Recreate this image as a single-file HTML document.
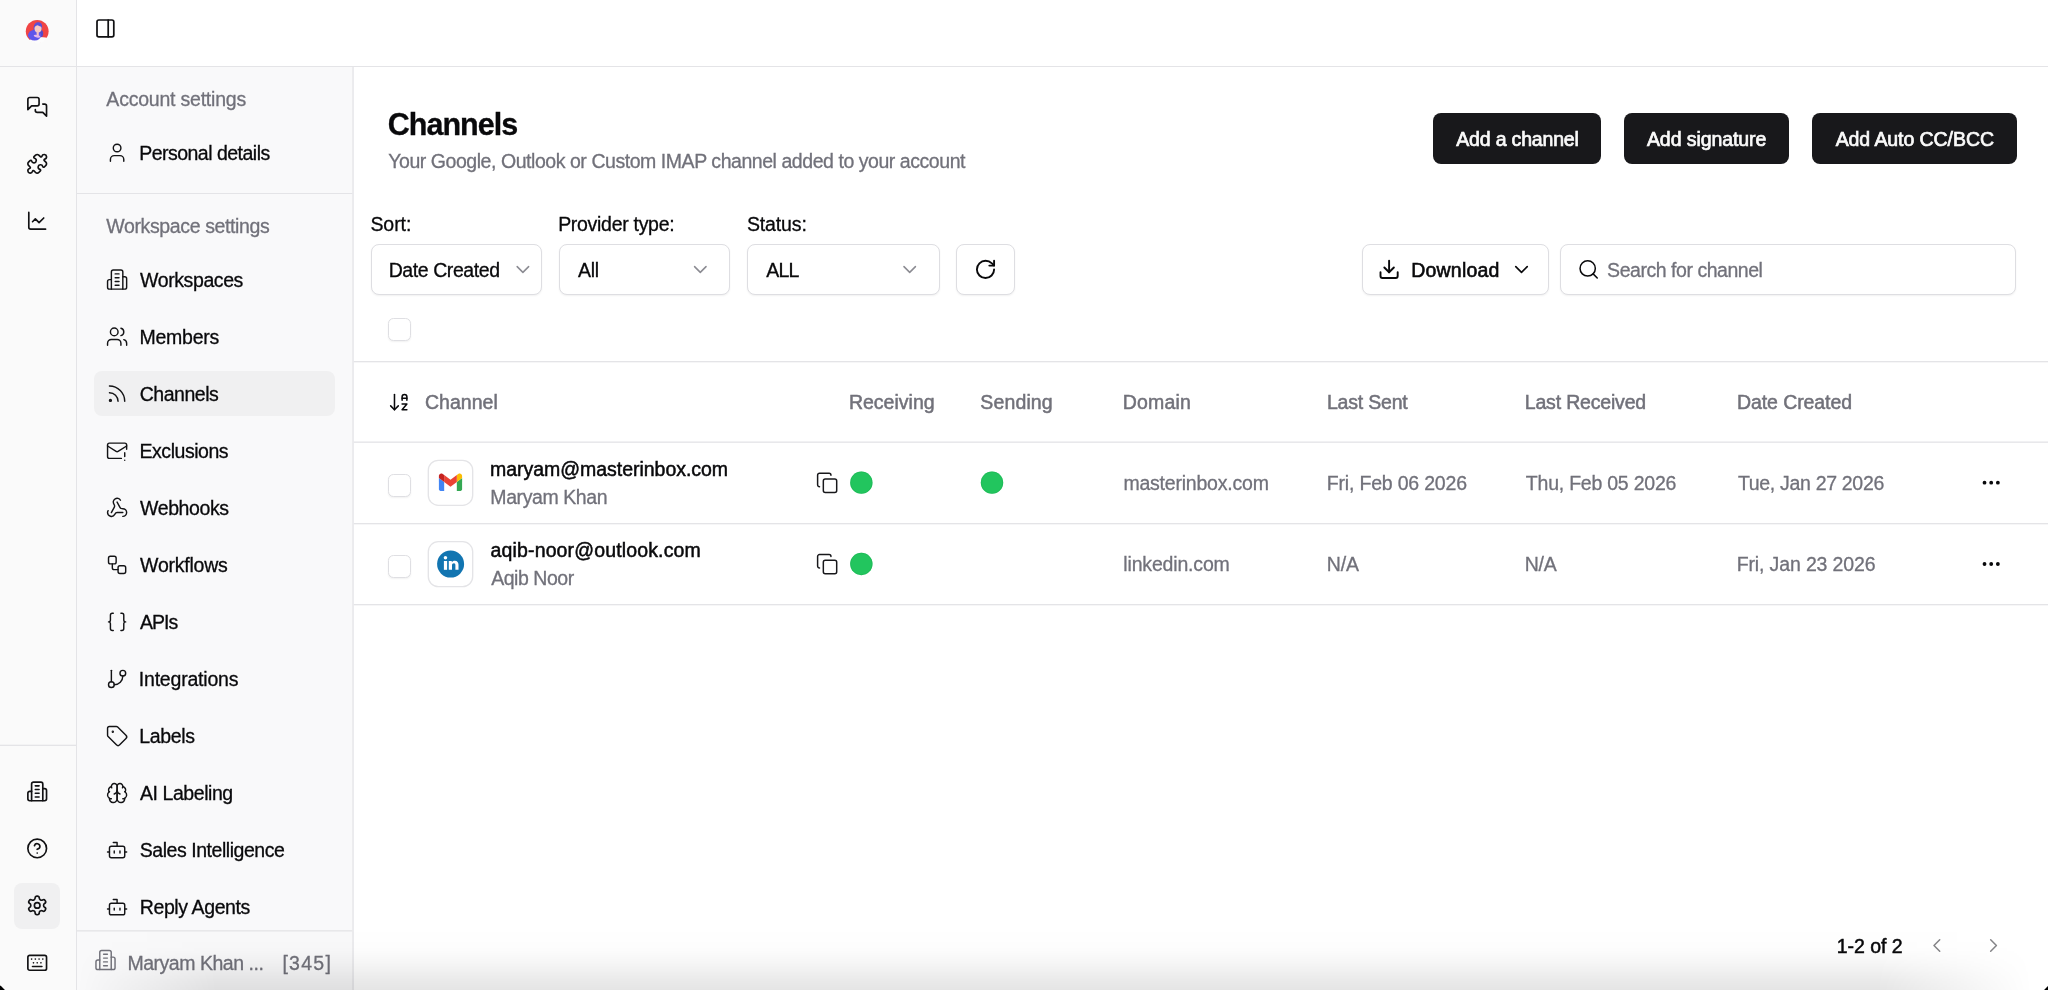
<!DOCTYPE html>
<html><head><meta charset="utf-8"><title>Channels</title>
<style>
html,body{margin:0;padding:0;background:#fff;width:2048px;height:990px;overflow:hidden}
#r{width:2048px;height:990px;position:relative;overflow:hidden;font-family:"Liberation Sans",sans-serif;-webkit-font-smoothing:antialiased}
#r>div,#r>span,#r>svg{position:absolute;display:block}
#r>span{white-space:nowrap;line-height:normal;will-change:transform}
</style></head><body><div id="r">
<div style="left:0px;top:0px;width:76px;height:990px;background:#fafafa"></div>
<div style="left:77px;top:67px;width:276px;height:923px;background:#f9f9fa"></div>
<svg style="left:0;top:0" width="2048" height="990" viewBox="0 0 2048 990"><rect x="76" y="0" width="1" height="990" fill="#e4e4e7"/><rect x="0" y="66" width="2048" height="1" fill="#e4e4e7"/><rect x="352.38" y="67" width="1.33" height="923" fill="#e4e4e7"/><rect x="0" y="744.7" width="76" height="1.33" fill="#e4e4e7"/><rect x="77" y="193" width="275.4" height="1" fill="#e4e4e7"/><rect x="77" y="930.2" width="275.4" height="1.33" fill="#e4e4e7"/><rect x="353.7" y="361" width="1695" height="1.33" fill="#e4e4e7"/><rect x="353.7" y="441.5" width="1695" height="1.33" fill="#e4e4e7"/><rect x="353.7" y="523" width="1695" height="1.33" fill="#e4e4e7"/><rect x="353.7" y="604" width="1695" height="1.33" fill="#e4e4e7"/></svg>
<svg style="left:22px;top:15px" width="30" height="30" viewBox="0 0 30 30">
<defs><clipPath id="av"><circle cx="15.2" cy="16.3" r="11.4"/></clipPath><clipPath id="av2"><circle cx="15.2" cy="16.3" r="12.1"/></clipPath></defs>
<g clip-path="url(#av)"><rect width="30" height="30" fill="#f04444"/></g>
<g clip-path="url(#av2)"><ellipse cx="18.5" cy="28.6" rx="13" ry="6.6" fill="#fcfcfc"/></g>
<g clip-path="url(#av)">
<ellipse cx="18.9" cy="18.6" rx="2.3" ry="3.6" fill="#5548c8"/>
<ellipse cx="12.6" cy="20.2" rx="6.6" ry="5.4" fill="#5f55ea"/>
<path d="M11.6 15.5 C11 9.5 13.5 7.2 16.2 7.2 C19.2 7.2 20.6 9.6 20 13 L19 15 Z" fill="#5a4fd6"/>
<ellipse cx="16" cy="13.6" rx="3.5" ry="3.9" fill="#f8c8c2"/>
<path d="M12.4 12.2 C12.8 9.3 15 8.6 16.8 8.9 C18.6 9.2 19.6 10.4 19.6 11.6 C17.8 11.4 16.4 10.6 15.2 10.2 C14.2 10.6 13.2 11.4 12.4 12.2 Z" fill="#5a4fd6"/>
<rect x="14.6" y="16.6" width="2.2" height="5" fill="#f6bfc4"/>
<ellipse cx="15" cy="21.3" rx="3.3" ry="1.3" fill="#e3b4ec" transform="rotate(12 15 21.3)"/>
</g></svg>
<svg style="left:94px;top:17px" width="24" height="24" fill="none" stroke="#111113" stroke-width="1.85" stroke-linecap="round" stroke-linejoin="round"><g transform="translate(0.200 0.200) scale(0.93333 0.93333) translate(0 0)"><rect width="18" height="18" x="3" y="3" rx="2"/><path d="M15 3v18"/></g></svg>
<svg style="left:26px;top:95px" width="24" height="25" fill="none" stroke="#111113" stroke-width="1.78" stroke-linecap="round" stroke-linejoin="round"><g transform="translate(0.000 0.650) scale(0.93333 0.93333) translate(0 0)"><path d="M14 9a2 2 0 0 1-2 2H6l-4 4V4a2 2 0 0 1 2-2h8a2 2 0 0 1 2 2z"/><path d="M18 9h2a2 2 0 0 1 2 2v11l-4-4h-6a2 2 0 0 1-2-2v-1"/></g></svg>
<svg style="left:26px;top:152px" width="24" height="25" fill="none" stroke="#111113" stroke-width="1.78" stroke-linecap="round" stroke-linejoin="round"><g transform="translate(0.000 0.600) scale(0.93333 0.93333) translate(0 0)"><path d="M15.39 4.39a1 1 0 0 0 1.68-.474 2.5 2.5 0 1 1 3.014 3.015 1 1 0 0 0-.474 1.68l1.683 1.682a2.414 2.414 0 0 1 0 3.414L19.61 15.39a1 1 0 0 1-1.68-.474 2.5 2.5 0 1 0-3.014 3.015 1 1 0 0 1 .474 1.68l-1.683 1.682a2.414 2.414 0 0 1-3.414 0L8.61 19.61a1 1 0 0 0-1.68.474 2.5 2.5 0 1 1-3.014-3.015 1 1 0 0 0 .474-1.68l-1.683-1.682a2.414 2.414 0 0 1 0-3.414L4.39 8.61a1 1 0 0 1 1.68.474 2.5 2.5 0 1 0 3.014-3.015 1 1 0 0 1-.474-1.68l1.683-1.682a2.414 2.414 0 0 1 3.414 0z"/></g></svg>
<svg style="left:26px;top:209px" width="24" height="25" fill="none" stroke="#111113" stroke-width="1.78" stroke-linecap="round" stroke-linejoin="round"><g transform="translate(0.000 0.600) scale(0.93333 0.93333) translate(0 0)"><path d="M3 3v16a2 2 0 0 0 2 2h16"/><path d="m19 9-5 5-4-4-3 3"/></g></svg>
<svg style="left:26px;top:780px" width="24" height="24" fill="none" stroke="#111113" stroke-width="1.78" stroke-linecap="round" stroke-linejoin="round"><g transform="translate(0.000 0.200) scale(0.93333 0.93333) translate(0 0)"><path d="M6 22V4a2 2 0 0 1 2-2h8a2 2 0 0 1 2 2v18Z"/><path d="M6 12H4a2 2 0 0 0-2 2v6a2 2 0 0 0 2 2h2"/><path d="M18 9h2a2 2 0 0 1 2 2v9a2 2 0 0 1-2 2h-2"/><path d="M10 6h4"/><path d="M10 10h4"/><path d="M10 14h4"/><path d="M10 18h4"/></g></svg>
<svg style="left:26px;top:837px" width="24" height="24" fill="none" stroke="#111113" stroke-width="1.78" stroke-linecap="round" stroke-linejoin="round"><g transform="translate(0.000 0.200) scale(0.93333 0.93333) translate(0 0)"><circle cx="12" cy="12" r="10"/><path d="M9.09 9a3 3 0 0 1 5.83 1c0 2-3 3-3 3"/><path d="M12 17h.01"/></g></svg>
<div style="left:14px;top:883px;width:46px;height:46px;background:#f0f0f1;border-radius:8px"></div>
<svg style="left:26px;top:894px" width="24" height="24" fill="none" stroke="#111113" stroke-width="1.78" stroke-linecap="round" stroke-linejoin="round"><g transform="translate(0.000 0.200) scale(0.93333 0.93333) translate(0 0)"><path d="M12.22 2h-.44a2 2 0 0 0-2 2v.18a2 2 0 0 1-1 1.73l-.43.25a2 2 0 0 1-2 0l-.15-.08a2 2 0 0 0-2.73.73l-.22.38a2 2 0 0 0 .73 2.73l.15.1a2 2 0 0 1 1 1.72v.51a2 2 0 0 1-1 1.74l-.15.09a2 2 0 0 0-.73 2.73l.22.38a2 2 0 0 0 2.73.73l.15-.08a2 2 0 0 1 2 0l.43.25a2 2 0 0 1 1 1.73V20a2 2 0 0 0 2 2h.44a2 2 0 0 0 2-2v-.18a2 2 0 0 1 1-1.73l.43-.25a2 2 0 0 1 2 0l.15.08a2 2 0 0 0 2.73-.73l.22-.39a2 2 0 0 0-.73-2.73l-.15-.08a2 2 0 0 1-1-1.74v-.5a2 2 0 0 1 1-1.74l.15-.09a2 2 0 0 0 .73-2.73l-.22-.38a2 2 0 0 0-2.73-.73l-.15.08a2 2 0 0 1-2 0l-.43-.25a2 2 0 0 1-1-1.73V4a2 2 0 0 0-2-2z"/><circle cx="12" cy="12" r="3"/></g></svg>
<svg style="left:26px;top:951px" width="24" height="24" fill="none" stroke="#111113" stroke-width="1.78" stroke-linecap="round" stroke-linejoin="round"><g transform="translate(0.000 0.600) scale(0.93333 0.93333) translate(0 0)"><path d="M10 8h.01"/><path d="M12 12h.01"/><path d="M14 8h.01"/><path d="M16 12h.01"/><path d="M18 8h.01"/><path d="M6 8h.01"/><path d="M7 16h10"/><path d="M8 12h.01"/><rect width="20" height="16" x="2" y="4" rx="2"/></g></svg>
<span id="t1" style="left:106px;padding-left:0.35px;top:88px;font-size:19.5px;font-weight:400;color:#71717a;letter-spacing:-0.219px;-webkit-text-stroke:0.3px #71717a;">Account settings</span>
<svg style="left:105px;top:141px" width="25" height="25" fill="none" stroke="#141416" stroke-width="1.5" stroke-linecap="round" stroke-linejoin="round"><g transform="translate(0.650 0.300) scale(0.95417 0.95417) translate(0 0)"><path d="M19 21v-2a4 4 0 0 0-4-4H9a4 4 0 0 0-4 4v2"/><circle cx="12" cy="7" r="4"/></g></svg>
<span id="t2" style="left:139px;padding-left:0.15px;top:142px;font-size:19.5px;font-weight:400;color:#09090b;letter-spacing:-0.510px;-webkit-text-stroke:0.3px #09090b;">Personal details</span>
<span id="t3" style="left:106px;padding-left:0.30px;top:215px;font-size:19.5px;font-weight:400;color:#71717a;letter-spacing:-0.373px;-webkit-text-stroke:0.3px #71717a;">Workspace settings</span>
<svg style="left:105px;top:268px" width="25" height="25" fill="none" stroke="#141416" stroke-width="1.5" stroke-linecap="round" stroke-linejoin="round"><g transform="translate(0.650 0.150) scale(0.95417 0.95417) translate(0 0)"><path d="M6 22V4a2 2 0 0 1 2-2h8a2 2 0 0 1 2 2v18Z"/><path d="M6 12H4a2 2 0 0 0-2 2v6a2 2 0 0 0 2 2h2"/><path d="M18 9h2a2 2 0 0 1 2 2v9a2 2 0 0 1-2 2h-2"/><path d="M10 6h4"/><path d="M10 10h4"/><path d="M10 14h4"/><path d="M10 18h4"/></g></svg>
<span id="t4" style="left:140px;padding-left:0.10px;top:269px;font-size:19.5px;font-weight:400;color:#09090b;letter-spacing:-0.409px;-webkit-text-stroke:0.3px #09090b;">Workspaces</span>
<svg style="left:105px;top:325px" width="25" height="25" fill="none" stroke="#141416" stroke-width="1.5" stroke-linecap="round" stroke-linejoin="round"><g transform="translate(0.650 0.200) scale(0.95417 0.95417) translate(0 0)"><path d="M16 21v-2a4 4 0 0 0-4-4H6a4 4 0 0 0-4 4v2"/><circle cx="9" cy="7" r="4"/><path d="M22 21v-2a4 4 0 0 0-3-3.87"/><path d="M16 3.13a4 4 0 0 1 0 7.75"/></g></svg>
<span id="t5" style="left:139px;padding-left:0.55px;top:326px;font-size:19.5px;font-weight:400;color:#09090b;letter-spacing:-0.261px;-webkit-text-stroke:0.3px #09090b;">Members</span>
<div style="left:94px;top:371px;width:241px;height:45px;background:#f0f0f1;border-radius:8px"></div>
<svg style="left:105px;top:382px" width="25" height="25" fill="none" stroke="#141416" stroke-width="1.5" stroke-linecap="round" stroke-linejoin="round"><g transform="translate(0.650 0.250) scale(0.95417 0.95417) translate(0 0)"><path d="M4 11a9 9 0 0 1 9 9"/><path d="M4 4a16 16 0 0 1 16 16"/><circle cx="5" cy="19" r="1"/></g></svg>
<span id="t6" style="left:139px;padding-left:0.70px;top:383px;font-size:19.5px;font-weight:400;color:#09090b;letter-spacing:-0.477px;-webkit-text-stroke:0.3px #09090b;">Channels</span>
<svg style="left:105px;top:439px" width="25" height="25" fill="none" stroke="#141416" stroke-width="1.5" stroke-linecap="round" stroke-linejoin="round"><g transform="translate(0.650 0.300) scale(0.95417 0.95417) translate(0 0)"><path d="M22 10.5V6a2 2 0 0 0-2-2H4a2 2 0 0 0-2 2v12c0 1.1.9 2 2 2h12.5"/><path d="m22 7-8.97 5.7a1.94 1.94 0 0 1-2.06 0L2 7"/><path d="M20 14v4"/><path d="M20 22v.01"/></g></svg>
<span id="t7" style="left:139px;padding-left:0.55px;top:440px;font-size:19.5px;font-weight:400;color:#09090b;letter-spacing:-0.467px;-webkit-text-stroke:0.3px #09090b;">Exclusions</span>
<svg style="left:105px;top:496px" width="25" height="25" fill="none" stroke="#141416" stroke-width="1.5" stroke-linecap="round" stroke-linejoin="round"><g transform="translate(0.650 0.350) scale(0.95417 0.95417) translate(0 0)"><path d="M18 16.98h-5.99c-1.1 0-1.95.94-2.48 1.9A4 4 0 0 1 2 17c.01-.7.2-1.4.57-2"/><path d="m6 17 3.13-5.78c.53-.97.1-2.18-.5-3.1a4 4 0 1 1 6.89-4.06"/><path d="m12 6 3.13 5.73C15.66 12.7 16.9 13 18 13a4 4 0 0 1 0 8"/></g></svg>
<span id="t8" style="left:140px;padding-left:0.10px;top:497px;font-size:19.5px;font-weight:400;color:#09090b;letter-spacing:-0.404px;-webkit-text-stroke:0.3px #09090b;">Webhooks</span>
<svg style="left:105px;top:553px" width="25" height="25" fill="none" stroke="#141416" stroke-width="1.5" stroke-linecap="round" stroke-linejoin="round"><g transform="translate(0.650 0.400) scale(0.95417 0.95417) translate(0 0)"><rect width="8" height="8" x="3" y="3" rx="2"/><path d="M7 11v4a2 2 0 0 0 2 2h4"/><rect width="8" height="8" x="13" y="13" rx="2"/></g></svg>
<span id="t9" style="left:140px;padding-left:0.10px;top:554px;font-size:19.5px;font-weight:400;color:#09090b;letter-spacing:-0.227px;-webkit-text-stroke:0.3px #09090b;">Workflows</span>
<svg style="left:105px;top:610px" width="25" height="25" fill="none" stroke="#141416" stroke-width="1.5" stroke-linecap="round" stroke-linejoin="round"><g transform="translate(0.650 0.450) scale(0.95417 0.95417) translate(0 0)"><path d="M8 3H7a2 2 0 0 0-2 2v5a2 2 0 0 1-2 2 2 2 0 0 1 2 2v5c0 1.1.9 2 2 2h1"/><path d="M16 21h1a2 2 0 0 0 2-2v-5c0-1.1.9-2 2-2a2 2 0 0 1-2-2V5a2 2 0 0 0-2-2h-1"/></g></svg>
<span id="t10" style="left:140px;padding-left:0.05px;top:611px;font-size:19.5px;font-weight:400;color:#09090b;letter-spacing:-1.027px;-webkit-text-stroke:0.3px #09090b;">APIs</span>
<svg style="left:105px;top:667px" width="25" height="25" fill="none" stroke="#141416" stroke-width="1.5" stroke-linecap="round" stroke-linejoin="round"><g transform="translate(0.650 0.500) scale(0.95417 0.95417) translate(0 0)"><line x1="6" x2="6" y1="3" y2="15"/><circle cx="18" cy="6" r="3"/><circle cx="6" cy="18" r="3"/><path d="M18 9a9 9 0 0 1-9 9"/></g></svg>
<span id="t11" style="left:138px;padding-left:0.80px;top:668px;font-size:19.5px;font-weight:400;color:#09090b;letter-spacing:-0.205px;-webkit-text-stroke:0.3px #09090b;">Integrations</span>
<svg style="left:105px;top:724px" width="25" height="25" fill="none" stroke="#141416" stroke-width="1.5" stroke-linecap="round" stroke-linejoin="round"><g transform="translate(0.650 0.550) scale(0.95417 0.95417) translate(0 0)"><path d="M12.586 2.586A2 2 0 0 0 11.172 2H4a2 2 0 0 0-2 2v7.172a2 2 0 0 0 .586 1.414l8.704 8.704a2.426 2.426 0 0 0 3.42 0l6.58-6.58a2.426 2.426 0 0 0 0-3.42z"/><circle cx="7.5" cy="7.5" r=".5" fill="#141416"/></g></svg>
<span id="t12" style="left:139px;padding-left:0.25px;top:725px;font-size:19.5px;font-weight:400;color:#09090b;letter-spacing:-0.353px;-webkit-text-stroke:0.3px #09090b;">Labels</span>
<svg style="left:105px;top:781px" width="25" height="25" fill="none" stroke="#141416" stroke-width="1.5" stroke-linecap="round" stroke-linejoin="round"><g transform="translate(0.650 0.600) scale(0.95417 0.95417) translate(0 0)"><path d="M12 5a3 3 0 1 0-5.997.125 4 4 0 0 0-2.526 5.77 4 4 0 0 0 .556 6.588A4 4 0 1 0 12 18Z"/><path d="M12 5a3 3 0 1 1 5.997.125 4 4 0 0 1 2.526 5.77 4 4 0 0 1-.556 6.588A4 4 0 1 1 12 18Z"/><path d="M15 13a4.5 4.5 0 0 1-3-4 4.5 4.5 0 0 1-3 4"/><path d="M17.599 6.5a3 3 0 0 0 .399-1.375"/><path d="M6.003 5.125A3 3 0 0 0 6.401 6.5"/><path d="M3.477 10.896a4 4 0 0 1 .585-.396"/><path d="M19.938 10.5a4 4 0 0 1 .585.396"/><path d="M6 18a4 4 0 0 1-1.967-.516"/><path d="M19.967 17.484A4 4 0 0 1 18 18"/></g></svg>
<span id="t13" style="left:140px;padding-left:0.05px;top:782px;font-size:19.5px;font-weight:400;color:#09090b;letter-spacing:-0.443px;-webkit-text-stroke:0.3px #09090b;">AI Labeling</span>
<svg style="left:105px;top:838px" width="25" height="25" fill="none" stroke="#141416" stroke-width="1.5" stroke-linecap="round" stroke-linejoin="round"><g transform="translate(0.650 0.650) scale(0.95417 0.95417) translate(0 0)"><path d="M12 8V4H8"/><rect width="16" height="12" x="4" y="8" rx="2"/><path d="M2 14h2"/><path d="M20 14h2"/><path d="M15 13v2"/><path d="M9 13v2"/></g></svg>
<span id="t14" style="left:139px;padding-left:0.70px;top:839px;font-size:19.5px;font-weight:400;color:#09090b;letter-spacing:-0.450px;-webkit-text-stroke:0.3px #09090b;">Sales Intelligence</span>
<svg style="left:105px;top:895px" width="25" height="25" fill="none" stroke="#141416" stroke-width="1.5" stroke-linecap="round" stroke-linejoin="round"><g transform="translate(0.650 0.700) scale(0.95417 0.95417) translate(0 0)"><path d="M12 8V4H8"/><rect width="16" height="12" x="4" y="8" rx="2"/><path d="M2 14h2"/><path d="M20 14h2"/><path d="M15 13v2"/><path d="M9 13v2"/></g></svg>
<span id="t15" style="left:139px;padding-left:0.75px;top:896px;font-size:19.5px;font-weight:400;color:#09090b;letter-spacing:-0.392px;-webkit-text-stroke:0.3px #09090b;">Reply Agents</span>
<svg style="left:94px;top:948px" width="24" height="25" fill="none" stroke="#71717a" stroke-width="1.5" stroke-linecap="round" stroke-linejoin="round"><g transform="translate(0.050 0.550) scale(0.95417 0.95417) translate(0 0)"><path d="M6 22V4a2 2 0 0 1 2-2h8a2 2 0 0 1 2 2v18Z"/><path d="M6 12H4a2 2 0 0 0-2 2v6a2 2 0 0 0 2 2h2"/><path d="M18 9h2a2 2 0 0 1 2 2v9a2 2 0 0 1-2 2h-2"/><path d="M10 6h4"/><path d="M10 10h4"/><path d="M10 14h4"/><path d="M10 18h4"/></g></svg>
<span id="t16" style="left:127px;padding-left:0.45px;top:952px;font-size:19.5px;font-weight:400;color:#71717a;letter-spacing:-0.478px;-webkit-text-stroke:0.3px #71717a;">Maryam Khan ...</span>
<span id="t17" style="left:282px;padding-left:0.40px;top:952px;font-size:19.5px;font-weight:400;color:#71717a;letter-spacing:1.262px;-webkit-text-stroke:0.3px #71717a;">[345]</span>
<span id="t18" style="left:387px;padding-left:0.80px;top:107px;font-size:30.5px;font-weight:700;color:#09090b;letter-spacing:-0.988px;-webkit-text-stroke:0.3px #09090b;">Channels</span>
<span id="t19" style="left:388px;padding-left:0.25px;top:150px;font-size:19.5px;font-weight:400;color:#71717a;letter-spacing:-0.449px;-webkit-text-stroke:0.3px #71717a;">Your Google, Outlook or Custom IMAP channel added to your account</span>
<div style="left:1433px;top:113px;width:168px;height:51px;background:#18181b;border-radius:8px"></div>
<span id="t20" style="left:1456px;padding-left:0.25px;top:128px;font-size:19.5px;font-weight:400;color:#fafafa;letter-spacing:-0.175px;-webkit-text-stroke:0.7px #fafafa;">Add a channel</span>
<div style="left:1624px;top:113px;width:165px;height:51px;background:#18181b;border-radius:8px"></div>
<span id="t21" style="left:1646px;padding-left:0.95px;top:128px;font-size:19.5px;font-weight:400;color:#fafafa;letter-spacing:-0.074px;-webkit-text-stroke:0.7px #fafafa;">Add signature</span>
<div style="left:1812px;top:113px;width:205px;height:51px;background:#18181b;border-radius:8px"></div>
<span id="t22" style="left:1835px;padding-left:0.65px;top:128px;font-size:19.5px;font-weight:400;color:#fafafa;letter-spacing:-0.071px;-webkit-text-stroke:0.7px #fafafa;">Add Auto CC/BCC</span>
<span id="t23" style="left:370px;padding-left:0.40px;top:213px;font-size:19.5px;font-weight:400;color:#09090b;letter-spacing:-0.041px;-webkit-text-stroke:0.3px #09090b;">Sort:</span>
<span id="t24" style="left:558px;padding-left:0.15px;top:213px;font-size:19.5px;font-weight:400;color:#09090b;letter-spacing:-0.295px;-webkit-text-stroke:0.3px #09090b;">Provider type:</span>
<span id="t25" style="left:746px;padding-left:0.90px;top:213px;font-size:19.5px;font-weight:400;color:#09090b;letter-spacing:-0.130px;-webkit-text-stroke:0.3px #09090b;">Status:</span>
<div style="left:371px;top:244px;width:171px;height:51px;background:#fff;border:1px solid #dedee2;border-radius:8px;box-shadow:0 1px 2px rgba(0,0,0,0.06);box-sizing:border-box"></div>
<span id="t26" style="left:388px;padding-left:0.65px;top:259px;font-size:19.5px;font-weight:400;color:#09090b;letter-spacing:-0.413px;-webkit-text-stroke:0.3px #09090b;">Date Created</span>
<svg style="left:511px;top:258px" width="25" height="24" fill="none" stroke="#8b8b92" stroke-width="1.6" stroke-linecap="round" stroke-linejoin="round"><g transform="translate(0.450 0.050) scale(0.95417 0.95417) translate(0 0)"><path d="m6 9 6 6 6-6"/></g></svg>
<div style="left:559px;top:244px;width:171px;height:51px;background:#fff;border:1px solid #dedee2;border-radius:8px;box-shadow:0 1px 2px rgba(0,0,0,0.06);box-sizing:border-box"></div>
<span id="t27" style="left:577px;padding-left:0.95px;top:259px;font-size:19.5px;font-weight:400;color:#09090b;letter-spacing:-0.294px;-webkit-text-stroke:0.3px #09090b;">All</span>
<svg style="left:688px;top:258px" width="25" height="24" fill="none" stroke="#8b8b92" stroke-width="1.6" stroke-linecap="round" stroke-linejoin="round"><g transform="translate(0.850 0.050) scale(0.95417 0.95417) translate(0 0)"><path d="m6 9 6 6 6-6"/></g></svg>
<div style="left:747px;top:244px;width:193px;height:51px;background:#fff;border:1px solid #dedee2;border-radius:8px;box-shadow:0 1px 2px rgba(0,0,0,0.06);box-sizing:border-box"></div>
<span id="t28" style="left:766px;padding-left:0.25px;top:259px;font-size:19.5px;font-weight:400;color:#09090b;letter-spacing:-0.776px;-webkit-text-stroke:0.3px #09090b;">ALL</span>
<svg style="left:898px;top:258px" width="25" height="24" fill="none" stroke="#8b8b92" stroke-width="1.6" stroke-linecap="round" stroke-linejoin="round"><g transform="translate(0.250 0.050) scale(0.95417 0.95417) translate(0 0)"><path d="m6 9 6 6 6-6"/></g></svg>
<div style="left:956px;top:244px;width:59px;height:51px;background:#fff;border:1px solid #dedee2;border-radius:8px;box-shadow:0 1px 2px rgba(0,0,0,0.06);box-sizing:border-box"></div>
<svg style="left:974px;top:257px" width="24" height="25" fill="none" stroke="#09090b" stroke-width="2" stroke-linecap="round" stroke-linejoin="round"><g transform="translate(0.050 0.950) scale(0.95417 0.95417) translate(0 0)"><path d="M21 12a9 9 0 1 1-9-9c2.52 0 4.93 1 6.74 2.74L21 8"/><path d="M21 3v5h-5"/></g></svg>
<div style="left:1362px;top:244px;width:187px;height:51px;background:#fff;border:1px solid #dedee2;border-radius:8px;box-shadow:0 1px 2px rgba(0,0,0,0.06);box-sizing:border-box"></div>
<svg style="left:1377px;top:257px" width="25" height="25" fill="none" stroke="#09090b" stroke-width="2" stroke-linecap="round" stroke-linejoin="round"><g transform="translate(0.650 0.950) scale(0.95417 0.95417) translate(0 0)"><path d="M21 15v4a2 2 0 0 1-2 2H5a2 2 0 0 1-2-2v-4"/><polyline points="7 10 12 15 17 10"/><line x1="12" x2="12" y1="15" y2="3"/></g></svg>
<span id="t29" style="left:1411px;padding-left:0.20px;top:259px;font-size:19.5px;font-weight:400;color:#09090b;letter-spacing:0.218px;-webkit-text-stroke:0.6px #09090b;">Download</span>
<svg style="left:1510px;top:258px" width="24" height="24" fill="none" stroke="#09090b" stroke-width="1.7" stroke-linecap="round" stroke-linejoin="round"><g transform="translate(0.050 0.050) scale(0.95417 0.95417) translate(0 0)"><path d="m6 9 6 6 6-6"/></g></svg>
<div style="left:1560px;top:244px;width:456px;height:51px;background:#fff;border:1px solid #dedee2;border-radius:8px;box-shadow:0 1px 2px rgba(0,0,0,0.06);box-sizing:border-box"></div>
<svg style="left:1577px;top:257px" width="25" height="25" fill="none" stroke="#09090b" stroke-width="1.6" stroke-linecap="round" stroke-linejoin="round"><g transform="translate(0.200 0.950) scale(0.95417 0.95417) translate(0 0)"><circle cx="11" cy="11" r="8"/><path d="m21 21-4.3-4.3"/></g></svg>
<span id="t30" style="left:1607px;padding-left:0.10px;top:259px;font-size:19.5px;font-weight:400;color:#71717a;letter-spacing:-0.462px;-webkit-text-stroke:0.3px #71717a;">Search for channel</span>
<div style="left:388px;top:318px;width:23px;height:23px;background:#fff;border:1px solid #dfdfe3;border-radius:5.5px;box-shadow:0 1px 2px rgba(0,0,0,0.06);box-sizing:border-box"></div>
<svg style="left:387px;top:390px" width="25" height="25" fill="none" stroke="#09090b" stroke-width="1.6" stroke-linecap="round" stroke-linejoin="round"><g transform="translate(0.800 0.600) scale(0.95417 0.95417) translate(0 0)"><path d="m3 16 4 4 4-4"/><path d="M7 20V4"/><path d="M20 8h-5"/><path d="M15 10V6.5a2.5 2.5 0 0 1 5 0V10"/><path d="M15 14h5l-5 6h5"/></g></svg>
<span id="t31" style="left:425px;padding-left:0.00px;top:391px;font-size:19.5px;font-weight:400;color:#71717a;letter-spacing:0.015px;-webkit-text-stroke:0.5px #71717a;">Channel</span>
<span id="t32" style="left:848px;padding-left:0.95px;top:391px;font-size:19.5px;font-weight:400;color:#71717a;letter-spacing:0.002px;-webkit-text-stroke:0.5px #71717a;">Receiving</span>
<span id="t33" style="left:980px;padding-left:0.30px;top:391px;font-size:19.5px;font-weight:400;color:#71717a;letter-spacing:0.138px;-webkit-text-stroke:0.5px #71717a;">Sending</span>
<span id="t34" style="left:1122px;padding-left:0.65px;top:391px;font-size:19.5px;font-weight:400;color:#71717a;letter-spacing:0.210px;-webkit-text-stroke:0.5px #71717a;">Domain</span>
<span id="t35" style="left:1326px;padding-left:0.95px;top:391px;font-size:19.5px;font-weight:400;color:#71717a;letter-spacing:-0.197px;-webkit-text-stroke:0.5px #71717a;">Last Sent</span>
<span id="t36" style="left:1524px;padding-left:0.75px;top:391px;font-size:19.5px;font-weight:400;color:#71717a;letter-spacing:-0.177px;-webkit-text-stroke:0.5px #71717a;">Last Received</span>
<span id="t37" style="left:1737px;padding-left:0.05px;top:391px;font-size:19.5px;font-weight:400;color:#71717a;letter-spacing:-0.094px;-webkit-text-stroke:0.5px #71717a;">Date Created</span>
<div style="left:388px;top:474px;width:23px;height:23px;background:#fff;border:1px solid #dfdfe3;border-radius:5.5px;box-shadow:0 1px 2px rgba(0,0,0,0.06);box-sizing:border-box"></div>
<svg style="left:424px;top:456px" width="53" height="54" ><g transform="translate(0.000 0.700) scale(1.00000 1.00000) translate(0 0)"><rect x="4.3" y="3.7" width="44.4" height="44.9" rx="10" fill="#fff" stroke="#e4e4e7" stroke-width="1.33"/></g></svg>
<svg style="left:438px;top:473px" width="26" height="19" ><g transform="translate(0.900 0.500) scale(0.26364 0.26364) translate(-52 -42)"><path fill="#4285f4" d="M58 108h14V74L52 59v43c0 3.32 2.69 6 6 6"/><path fill="#34a853" d="M120 108h14c3.32 0 6-2.69 6-6V59l-20 15"/><path fill="#fbbc04" d="M120 48v26l20-15v-8c0-7.42-8.47-11.65-14.4-7.2"/><path fill="#ea4335" d="M72 74V48l24 18 24-18v26L96 92"/><path fill="#c5221f" d="M52 51v8l20 15V48l-5.6-4.2c-5.94-4.45-14.4-.22-14.4 7.2"/></g></svg>
<span id="t38" style="left:490px;padding-left:0.10px;top:458px;font-size:19.5px;font-weight:400;color:#09090b;letter-spacing:-0.033px;-webkit-text-stroke:0.5px #09090b;">maryam@masterinbox.com</span>
<span id="t39" style="left:490px;padding-left:0.35px;top:486px;font-size:19.5px;font-weight:400;color:#71717a;letter-spacing:-0.424px;-webkit-text-stroke:0.3px #71717a;">Maryam Khan</span>
<svg style="left:815px;top:471px" width="25" height="25" fill="none" stroke="#18181b" stroke-width="1.55" stroke-linecap="round" stroke-linejoin="round"><g transform="translate(0.700 0.400) scale(0.95417 0.95417) translate(0 0)"><rect width="14" height="14" x="8" y="8" rx="2" ry="2"/><path d="M4 16c-1.1 0-2-.9-2-2V4c0-1.1.9-2 2-2h10c1.1 0 2 .9 2 2"/></g></svg>
<svg style="left:848px;top:469px" width="28" height="28" ><g transform="translate(0.350 0.650) scale(1.00000 1.00000) translate(0 0)"><circle cx="13" cy="13" r="11.2" fill="#22c55e"/><circle cx="13" cy="13" r="10.8" fill="none" stroke="#16a34a" stroke-opacity="0.35" stroke-width="0.8"/></g></svg>
<svg style="left:979px;top:469px" width="27" height="28" ><g transform="translate(0.000 0.650) scale(1.00000 1.00000) translate(0 0)"><circle cx="13" cy="13" r="11.2" fill="#22c55e"/><circle cx="13" cy="13" r="10.8" fill="none" stroke="#16a34a" stroke-opacity="0.35" stroke-width="0.8"/></g></svg>
<span id="t40" style="left:1123px;padding-left:0.40px;top:472px;font-size:19.5px;font-weight:400;color:#71717a;letter-spacing:-0.213px;-webkit-text-stroke:0.3px #71717a;">masterinbox.com</span>
<span id="t41" style="left:1326px;padding-left:0.85px;top:472px;font-size:19.5px;font-weight:400;color:#71717a;letter-spacing:-0.196px;-webkit-text-stroke:0.3px #71717a;">Fri, Feb 06 2026</span>
<span id="t42" style="left:1525px;padding-left:0.85px;top:472px;font-size:19.5px;font-weight:400;color:#71717a;letter-spacing:-0.227px;-webkit-text-stroke:0.3px #71717a;">Thu, Feb 05 2026</span>
<span id="t43" style="left:1737px;padding-left:0.95px;top:472px;font-size:19.5px;font-weight:400;color:#71717a;letter-spacing:-0.315px;-webkit-text-stroke:0.3px #71717a;">Tue, Jan 27 2026</span>
<svg style="left:1979px;top:471px" width="25" height="25" fill="none" stroke="#09090b" stroke-width="2" stroke-linecap="round" stroke-linejoin="round"><g transform="translate(0.750 0.250) scale(0.95417 0.95417) translate(0 0)"><circle cx="12" cy="12" r="1"/><circle cx="19" cy="12" r="1"/><circle cx="5" cy="12" r="1"/></g></svg>
<div style="left:388px;top:555px;width:23px;height:23px;background:#fff;border:1px solid #dfdfe3;border-radius:5.5px;box-shadow:0 1px 2px rgba(0,0,0,0.06);box-sizing:border-box"></div>
<svg style="left:424px;top:538px" width="53" height="53" ><g transform="translate(0.000 0.000) scale(1.00000 1.00000) translate(0 0)"><rect x="4.3" y="3.7" width="44.4" height="44.9" rx="10" fill="#fff" stroke="#e4e4e7" stroke-width="1.33"/></g></svg>
<svg style="left:436px;top:550px" width="30" height="30" ><g transform="translate(0.600 0.100) scale(1.00000 1.00000) translate(0 0)"><circle cx="14" cy="14" r="13.5" fill="#1275b1"/><g fill="#fff"><circle cx="8.85" cy="7.7" r="1.75"/><rect x="7.3" y="10.9" width="3.2" height="8.8"/><path d="M12.2 10.9h3v1.25c.5-.9 1.55-1.55 3-1.55 2.6 0 3.7 1.65 3.7 4.1v5h-3.1v-4.5c0-1.15-.35-1.95-1.5-1.95-1.25 0-1.9.9-1.9 2.05v4.4h-3.2z"/></g></g></svg>
<span id="t44" style="left:490px;padding-left:0.55px;top:539px;font-size:19.5px;font-weight:400;color:#09090b;letter-spacing:0.146px;-webkit-text-stroke:0.5px #09090b;">aqib-noor@outlook.com</span>
<span id="t45" style="left:491px;padding-left:0.15px;top:567px;font-size:19.5px;font-weight:400;color:#71717a;letter-spacing:-0.452px;-webkit-text-stroke:0.3px #71717a;">Aqib Noor</span>
<svg style="left:815px;top:552px" width="25" height="25" fill="none" stroke="#18181b" stroke-width="1.55" stroke-linecap="round" stroke-linejoin="round"><g transform="translate(0.700 0.700) scale(0.95417 0.95417) translate(0 0)"><rect width="14" height="14" x="8" y="8" rx="2" ry="2"/><path d="M4 16c-1.1 0-2-.9-2-2V4c0-1.1.9-2 2-2h10c1.1 0 2 .9 2 2"/></g></svg>
<svg style="left:848px;top:550px" width="28" height="28" ><g transform="translate(0.350 0.950) scale(1.00000 1.00000) translate(0 0)"><circle cx="13" cy="13" r="11.2" fill="#22c55e"/><circle cx="13" cy="13" r="10.8" fill="none" stroke="#16a34a" stroke-opacity="0.35" stroke-width="0.8"/></g></svg>
<span id="t46" style="left:1123px;padding-left:0.35px;top:553px;font-size:19.5px;font-weight:400;color:#71717a;letter-spacing:-0.176px;-webkit-text-stroke:0.3px #71717a;">linkedin.com</span>
<span id="t47" style="left:1326px;padding-left:0.85px;top:553px;font-size:19.5px;font-weight:400;color:#71717a;letter-spacing:-0.200px;-webkit-text-stroke:0.3px #71717a;">N/A</span>
<span id="t48" style="left:1524px;padding-left:0.65px;top:553px;font-size:19.5px;font-weight:400;color:#71717a;letter-spacing:-0.200px;-webkit-text-stroke:0.3px #71717a;">N/A</span>
<span id="t49" style="left:1736px;padding-left:0.75px;top:553px;font-size:19.5px;font-weight:400;color:#71717a;letter-spacing:-0.145px;-webkit-text-stroke:0.3px #71717a;">Fri, Jan 23 2026</span>
<svg style="left:1979px;top:552px" width="25" height="25" fill="none" stroke="#09090b" stroke-width="2" stroke-linecap="round" stroke-linejoin="round"><g transform="translate(0.750 0.550) scale(0.95417 0.95417) translate(0 0)"><circle cx="12" cy="12" r="1"/><circle cx="19" cy="12" r="1"/><circle cx="5" cy="12" r="1"/></g></svg>
<span id="t50" style="left:1836px;padding-left:0.70px;top:935px;font-size:19.5px;font-weight:400;color:#09090b;letter-spacing:-0.033px;-webkit-text-stroke:0.5px #09090b;">1-2 of 2</span>
<svg style="left:1925px;top:934px" width="25" height="24" fill="none" stroke="#858588" stroke-width="1.6" stroke-linecap="round" stroke-linejoin="round"><g transform="translate(0.400 0.100) scale(0.95417 0.95417) translate(0 0)"><path d="m15 18-6-6 6-6"/></g></svg>
<svg style="left:1982px;top:934px" width="24" height="24" fill="none" stroke="#858588" stroke-width="1.6" stroke-linecap="round" stroke-linejoin="round"><g transform="translate(0.100 0.100) scale(0.95417 0.95417) translate(0 0)"><path d="m9 18 6-6-6-6"/></g></svg>
<div style="left:77px;top:925px;width:1971px;height:65px;background:linear-gradient(to bottom,rgba(0,0,0,0) 0%,rgba(0,0,0,0.004) 23%,rgba(0,0,0,0.013) 38.5%,rgba(0,0,0,0.03) 54%,rgba(0,0,0,0.055) 69%,rgba(0,0,0,0.082) 84.6%,rgba(0,0,0,0.10) 100%);-webkit-mask-image:linear-gradient(to right,transparent 0,#000 140px,#000 1800px,rgba(0,0,0,0.5) 1880px,transparent 1955px);mask-image:linear-gradient(to right,transparent 0,#000 140px,#000 1800px,rgba(0,0,0,0.5) 1880px,transparent 1955px)"></div>
<div style="left:-3.5px;top:986.5px;width:7px;height:7px;background:#000;transform:rotate(45deg)"></div>
<div style="left:2044.5px;top:986.5px;width:7px;height:7px;background:#000;transform:rotate(45deg)"></div>
</div></body></html>
